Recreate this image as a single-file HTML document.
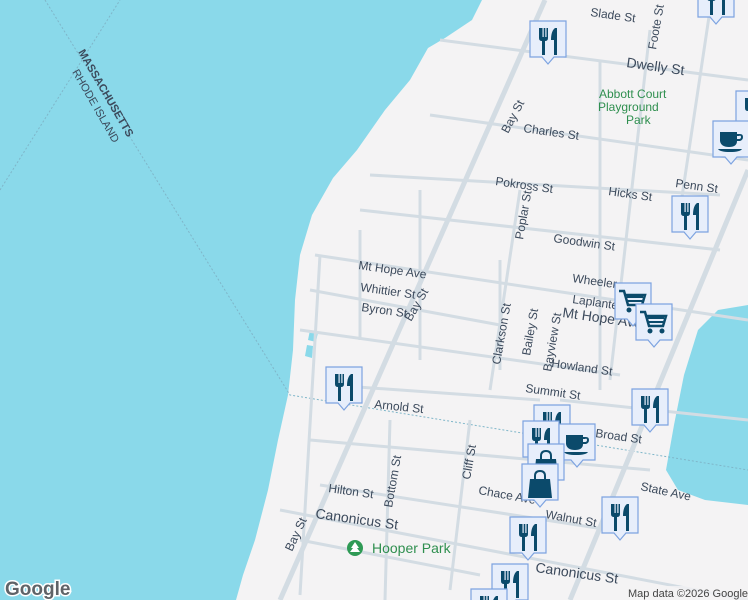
<!DOCTYPE html>
<html><head><meta charset="utf-8"><style>
html,body{margin:0;padding:0;width:748px;height:600px;overflow:hidden;background:#f4f3f4}
svg{display:block;overflow:hidden}
text{font-family:"Liberation Sans",sans-serif}
</style></head><body>
<svg width="748" height="600" viewBox="0 0 748 600" xmlns="http://www.w3.org/2000/svg" font-size="12" fill="#3c4a5c">
<defs>
<g id="mk"><path d="M1 1h36v36h-12l-6 7-6-7H1z" fill="#e7eefb" stroke="#7da3e0" stroke-width="1.2"/></g>
<g id="rest"><use href="#mk"/><path d="M10 8v10q0 3 3 3v14h3V21q3 0 3-3V8h-1.5v9h-1.2V8h-1.6v9h-1.2V8h-1.5z" fill="#0b4a6b"/><path d="M26 8q-4 3-4 12h3v15h3V8z" fill="#0b4a6b"/></g>
<g id="cafe"><use href="#mk"/><path d="M8 12h17v9q0 6-8 6t-9-6zM25 14h3q3 0 3 3t-3 4h-3v-2h2q2 0 2-2t-2-1h-2zM6 29h24q-2 3-12 3T6 29z" fill="#0b4a6b"/></g>
<g id="bag"><use href="#mk"/><path d="M9 16h20l2 19H7z" fill="#0b4a6b"/><path d="M14 16v-3q0-5 5-5t5 5v3" fill="none" stroke="#0b4a6b" stroke-width="2"/></g>
<g id="cart"><use href="#mk"/><path d="M5 9h5l4 14h14l3-10H12" fill="none" stroke="#0b4a6b" stroke-width="2.5"/><path d="M13 15h16M14 19h14" stroke="#0b4a6b" stroke-width="2"/><circle cx="15" cy="28" r="2.5" fill="#0b4a6b"/><circle cx="27" cy="28" r="2.5" fill="#0b4a6b"/></g>
</defs>
<rect width="748" height="600" fill="#f4f3f4"/>
<path d="M0 0H482L472 20 445 38 428 48 410 80 385 110 357 150 333 178 312 215 300 255 295 300 293 350 288 395 278 440 268 490 255 540 243 575 236 600H0z" fill="#8ad9ea"/>
<path d="M748 305L718 310 698 330 684 375 674 425 666 470 678 490 705 500 748 505z" fill="#8ad9ea"/>
<path d="M310 330l8 2-2 10-8-2zM307 345l6 1-1 12-7-2z" fill="#8ad9ea"/>
<path d="M0 190L120 0M45 0L290 395 748 470" stroke="#7fb6c9" stroke-width="1" stroke-dasharray="2 2" fill="none"/>
<g stroke="#d3dce3" stroke-width="3" fill="none">
<path d="M545 0L280 600" stroke-width="5"/>
<path d="M748 170L570 600" stroke-width="5"/>
<path d="M440 40L748 80M430 115L748 160M370 175L720 195M360 210L720 250M315 255L748 320M310 290L500 325M300 330L620 375M330 385L540 400M560 400L748 420M310 440L650 470M320 485L610 530M280 510L748 600M300 540L480 575"/>
<path d="M360 230v110M420 190v170M500 260v110M520 190l-30 200M600 60v330M650 30l-40 350M710 10l-30 200M470 420l-20 170M390 420l-5 180M320 255l-20 340"/>
</g>
<text x="78" y="52" transform="rotate(60 78 52)" font-size="11" font-weight="bold">MASSACHUSETTS</text>
<text x="72" y="72" transform="rotate(60 72 72)" font-size="11">RHODE ISLAND</text>
<text x="590" y="16" transform="rotate(8 590 16)">Slade St</text>
<text x="626" y="67" font-size="14" transform="rotate(8 626 67)">Dwelly St</text>
<text x="656" y="50" transform="rotate(-80 656 50)">Foote St</text>
<text x="599" y="98" fill="#2f8f4f">Abbott Court</text>
<text x="598" y="111" fill="#2f8f4f">Playground</text>
<text x="626" y="124" fill="#2f8f4f">Park</text>
<text x="523" y="132" transform="rotate(8 523 132)">Charles St</text>
<text x="508" y="134" transform="rotate(-62 508 134)">Bay St</text>
<text x="495" y="185" transform="rotate(8 495 185)">Pokross St</text>
<text x="608" y="195" transform="rotate(8 608 195)">Hicks St</text>
<text x="675" y="187" transform="rotate(8 675 187)">Penn St</text>
<text x="553" y="242" transform="rotate(8 553 242)">Goodwin St</text>
<text x="523" y="240" transform="rotate(-80 523 240)">Poplar St</text>
<text x="358" y="269" transform="rotate(8 358 269)">Mt Hope Ave</text>
<text x="360" y="291" transform="rotate(8 360 291)">Whittier St</text>
<text x="361" y="311" transform="rotate(8 361 311)">Byron St</text>
<text x="411" y="322" transform="rotate(-60 411 322)">Bay St</text>
<text x="572" y="282" transform="rotate(8 572 282)">Wheeler</text>
<text x="572" y="303" transform="rotate(8 572 303)">Laplante</text>
<text x="562" y="317" font-size="14" transform="rotate(8 562 317)">Mt Hope Ave</text>
<text x="500" y="365" transform="rotate(-80 500 365)">Clarkson St</text>
<text x="530" y="356" transform="rotate(-80 530 356)">Bailey St</text>
<text x="551" y="372" transform="rotate(-80 551 372)">Bayview St</text>
<text x="551" y="367" transform="rotate(8 551 367)">Howland St</text>
<text x="525" y="392" transform="rotate(8 525 392)">Summit St</text>
<text x="374" y="408" transform="rotate(6 374 408)">Arnold St</text>
<text x="595" y="437" transform="rotate(8 595 437)">Broad St</text>
<text x="640" y="490" transform="rotate(12 640 490)">State Ave</text>
<text x="478" y="494" transform="rotate(10 478 494)">Chace Ave</text>
<text x="545" y="518" transform="rotate(10 545 518)">Walnut St</text>
<text x="470" y="480" transform="rotate(-80 470 480)">Cliff St</text>
<text x="392" y="508" transform="rotate(-80 392 508)">Bottom St</text>
<text x="328" y="492" transform="rotate(8 328 492)">Hilton St</text>
<text x="315" y="518" font-size="14" transform="rotate(8 315 518)">Canonicus St</text>
<text x="535" y="572" font-size="14" transform="rotate(8 535 572)">Canonicus St</text>
<text x="292" y="552" transform="rotate(-65 292 552)">Bay St</text>
<circle cx="355" cy="548" r="8" fill="#2f9a55"/><path d="M355 542l-4 6h2l-3 4h10l-3-4h2z" fill="#fff"/>
<text x="372" y="553" font-size="14" fill="#2f8f4f">Hooper Park</text>
<text x="5" y="595" font-size="19" font-weight="bold" fill="#fff" stroke="#fff" stroke-width="3">Google</text>
<text x="5" y="595" font-size="19" font-weight="bold" fill="#5f6368">Google</text>
<rect x="622" y="586" width="126" height="14" fill="#f4f3f4" opacity=".8"/>
<text x="628" y="597" font-size="11" fill="#444">Map data ©2026 Google</text>
<use href="#rest" x="529" y="20"/>
<use href="#rest" x="697" y="-20"/>
<use href="#rest" x="735" y="90"/>
<use href="#cafe" x="712" y="120"/>
<use href="#rest" x="671" y="195"/>
<use href="#cart" x="614" y="282"/>
<use href="#cart" x="635" y="303"/>
<use href="#rest" x="325" y="366"/>
<use href="#rest" x="631" y="388"/>
<use href="#rest" x="533" y="404"/>
<use href="#rest" x="522" y="420"/>
<use href="#cafe" x="558" y="423"/>
<use href="#bag" x="527" y="443"/>
<use href="#bag" x="521" y="463"/>
<use href="#rest" x="601" y="496"/>
<use href="#rest" x="509" y="516"/>
<use href="#rest" x="491" y="563"/>
<use href="#rest" x="470" y="588"/>
</svg>
</body></html>
